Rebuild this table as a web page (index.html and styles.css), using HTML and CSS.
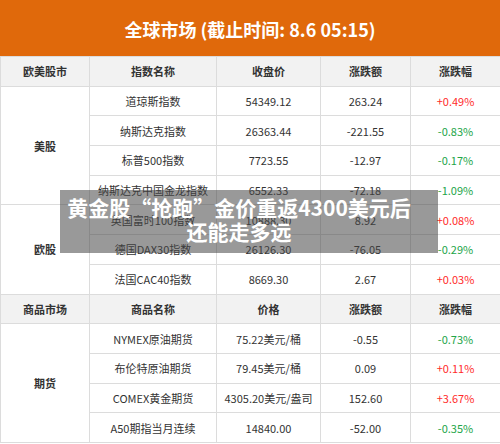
FILE: index.html
```html
<!DOCTYPE html>
<html>
  <head>
    <meta charset="utf-8">
    <link rel="stylesheet" href="styles.css">
  </head>
  <body>
    <div class="board">
      <div class="title">全球市场 (截止时间: 8.6 05:15)</div>
      <table class="market">
        <colgroup>
          <col class="c1"><col class="c2"><col class="c3"><col class="c4"><col class="c5">
        </colgroup>
        <tr class="head">
          <th>欧美股市</th><th>指数名称</th><th>收盘价</th><th>涨跌额</th><th>涨跌幅</th>
        </tr>
        <tr>
          <td class="group" rowspan="4">美股</td>
          <td>道琼斯指数</td><td>54349.12</td><td>263.24</td><td class="up">+0.49%</td>
        </tr>
        <tr><td>纳斯达克指数</td><td>26363.44</td><td>-221.55</td><td class="down">-0.83%</td></tr>
        <tr><td>标普500指数</td><td>7723.55</td><td>-12.97</td><td class="down">-0.17%</td></tr>
        <tr><td>纳斯达克中国金龙指数</td><td>6552.33</td><td>-72.18</td><td class="down">-1.09%</td></tr>
        <tr>
          <td class="group" rowspan="3">欧股</td>
          <td>英国富时100指数</td><td>10888.30</td><td>8.92</td><td class="up">+0.08%</td>
        </tr>
        <tr><td>德国DAX30指数</td><td>26126.30</td><td>-76.05</td><td class="down">-0.29%</td></tr>
        <tr><td>法国CAC40指数</td><td>8669.30</td><td>2.67</td><td class="up">+0.03%</td></tr>
        <tr class="head">
          <th>商品市场</th><th>商品名称</th><th>价格</th><th>涨跌额</th><th>涨跌幅</th>
        </tr>
        <tr>
          <td class="group" rowspan="4">期货</td>
          <td>NYMEX原油期货</td><td>75.22美元/桶</td><td>-0.55</td><td class="down">-0.73%</td>
        </tr>
        <tr><td>布伦特原油期货</td><td>79.45美元/桶</td><td>0.09</td><td class="up">+0.11%</td></tr>
        <tr><td>COMEX黄金期货</td><td>4305.20美元/盎司</td><td>152.60</td><td class="up">+3.67%</td></tr>
        <tr><td>A50期指当月连续</td><td>14840.00</td><td>-52.00</td><td class="down">-0.35%</td></tr>
      </table>
      <div class="caption">黄金股“抢跑”金价重返4300美元后<br>还能走多远</div>
    </div>
  </body>
</html>
```

FILE: styles.css
```css
body {
  margin: 0;
  background: #fff;
  font-family: "Noto Sans CJK SC", "Noto Sans", sans-serif;
  color: #333;
}
.board {
  position: relative;
  width: 500px;
}
.title {
  height: 56px;
  line-height: 58px;
  background-color: #e0690b;
  color: #fff;
  font-size: 18px;
  font-weight: bold;
  text-align: center;
}
.market {
  width: 500px;
  border-collapse: collapse;
  table-layout: fixed;
  font-size: 11px;
}
.c1 { width: 89px; }
.c2 { width: 127px; }
.c3 { width: 104px; }
.c4 { width: 90px; }
.c5 { width: 90px; }
.market tr {
  height: 29.7px;
}
.market th,
.market td {
  border: 1px solid #dcdcdc;
  padding: 0;
  text-align: center;
  white-space: nowrap;
  overflow: hidden;
}
.head th {
  background-color: #f2f2f2;
  font-weight: bold;
  color: #333;
}
.market td.group {
  font-weight: bold;
}
.up {
  color: #ff2b2b;
}
.down {
  color: #22a548;
}
/* 标题浮层 */
.caption {
  position: absolute;
  left: 60px;
  top: 190px;
  width: 378px;
  height: 63px;
  padding: 5px 20px 0 0;
  box-sizing: border-box;
  background-color: rgba(70, 70, 70, 0.55);
  color: #fff;
  font-size: 21px;
  font-weight: bold;
  line-height: 24px;
  text-align: center;
}
```
